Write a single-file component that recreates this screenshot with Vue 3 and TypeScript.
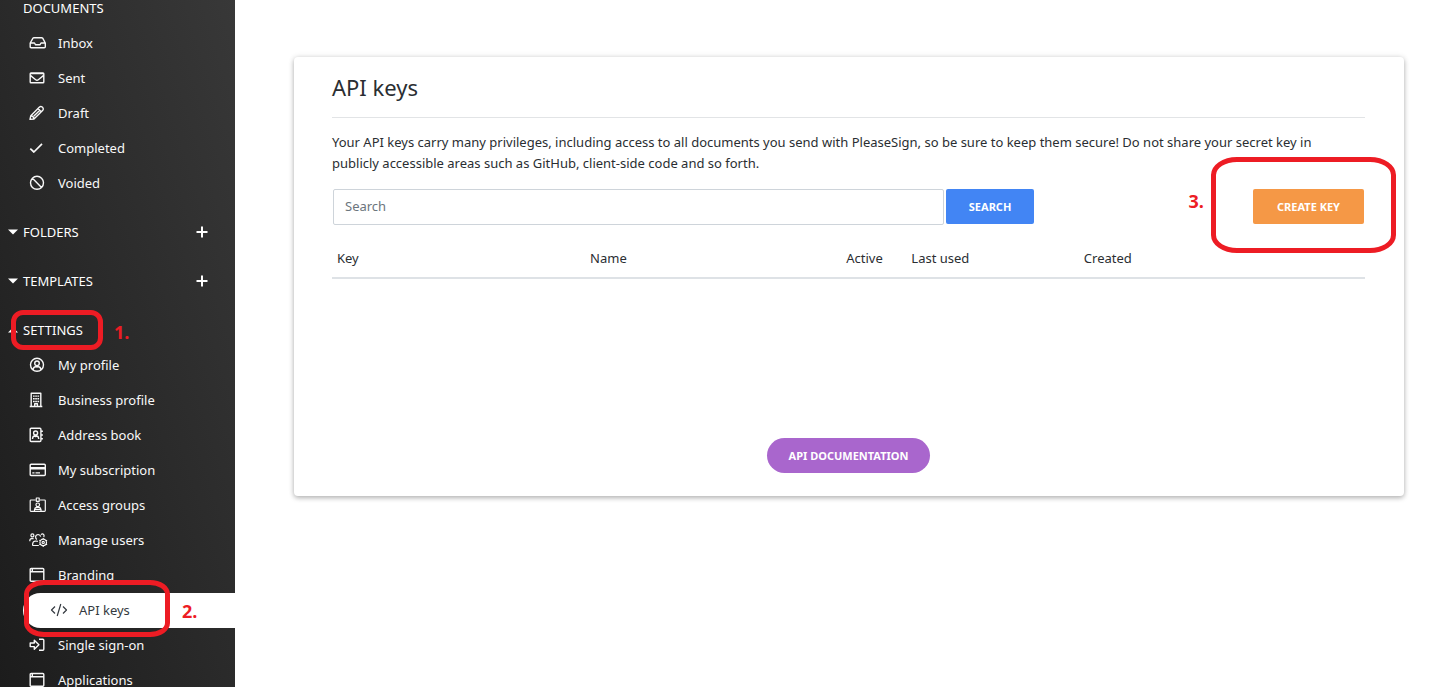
<script setup lang="ts">
import { ref } from 'vue'

interface NavItem {
  label: string
  icon: string
  active?: boolean
}

interface NavSection {
  title: string
  caret?: 'up' | 'down'
  addable?: boolean
  mark?: boolean
  items: NavItem[]
}

const sections: NavSection[] = [
  {
    title: 'DOCUMENTS',
    items: [
      { label: 'Inbox', icon: 'inbox' },
      { label: 'Sent', icon: 'mail' },
      { label: 'Draft', icon: 'pencil' },
      { label: 'Completed', icon: 'check' },
      { label: 'Voided', icon: 'ban' },
    ],
  },
  { title: 'FOLDERS', caret: 'down', addable: true, items: [] },
  { title: 'TEMPLATES', caret: 'down', addable: true, items: [] },
  {
    title: 'SETTINGS',
    caret: 'up',
    mark: true,
    items: [
      { label: 'My profile', icon: 'user' },
      { label: 'Business profile', icon: 'building' },
      { label: 'Address book', icon: 'book' },
      { label: 'My subscription', icon: 'card' },
      { label: 'Access groups', icon: 'badge' },
      { label: 'Manage users', icon: 'users' },
      { label: 'Branding', icon: 'window' },
      { label: 'API keys', icon: 'code', active: true },
      { label: 'Single sign-on', icon: 'signin' },
      { label: 'Applications', icon: 'window' },
    ],
  },
]

const icons: Record<string, string> = {
  inbox: 'M1.2 8 4 3.200Q4.300 2.700 5 2.700H12.600Q13.300 2.700 13.700 3.200L16.300 8V11.800Q16.300 12.800 15.300 12.800H2.200Q1.200 12.800 1.200 11.800ZM1.400 8H5.500L6.600 9.800H10.900L12 8H16.100',
  mail: 'M2 3H14Q14.800 3 14.800 3.800V12Q14.800 12.800 14 12.800H2Q1.200 12.800 1.200 12V3.800Q1.200 3 2 3ZM1.300 5.400 6.700 9.700Q8 10.700 9.300 9.700L14.700 5.400M1.400 3.600H14.600',
  pencil: 'M1 14.400 1.800 10.700 10.500 2Q11.800 .9 13.200 2L13.800 2.600Q14.900 4 13.800 5.300L5 14ZM2 10.900Q4.500 11.200 5.100 13.900M9.200 3.700 12.200 6.700M4.700 11.300 10.600 5.400',
  check: 'M1.300 8.700 4.900 12 13 3.900',
  ban: 'M8 1.300A6.500 6.500 0 1 1 8 14.300A6.500 6.500 0 1 1 8 1.300ZM3.500 3.200 12.500 12.400',
  user: 'M8 1.300A6.500 6.500 0 1 1 8 14.300A6.500 6.500 0 1 1 8 1.300ZM8 4A2.300 2.300 0 1 1 8 8.600A2.300 2.300 0 1 1 8 4ZM4.200 12.300Q4.600 9.700 6.600 9.700Q8 10.300 9.400 9.700Q11.400 9.700 11.800 12.300',
  building: 'M2.200 14.300V1.300H11.800V14.300M.7 14.500H13.300M4 4.100H5.700M6.200 4.100H7.900M8.400 4.100H10.100M4 6.800H5.700M6.200 6.800H7.900M8.400 6.800H10.100M4 9.500H5.700M6.200 9.500H7.900M8.400 9.500H10.100M5.700 14.500V11.800H8.400V14.500',
  book: 'M2.200 1.300H10.900Q11.900 1.300 11.900 2.300V13.500Q11.900 14.500 10.900 14.500H2.200Q1.200 14.500 1.200 13.500V2.300Q1.200 1.300 2.200 1.300ZM6.600 4A2 2 0 1 1 6.600 8A2 2 0 1 1 6.600 4ZM3.500 12Q3.700 9.200 5.200 9L6.600 9.500 8 9Q9.500 9.200 9.700 12M13.200 3.500V5M13.200 7.200V8.700M13.200 11V12.500',
  card: 'M2.200 2.300H15.300Q16.300 2.300 16.300 3.300V12.500Q16.300 13.500 15.300 13.500H2.200Q1.200 13.500 1.200 12.500V3.300Q1.200 2.300 2.200 2.300ZM1.200 5.600H16.300M1.200 6.800H16.300M3.300 10.900H5.500M6.500 10.900H11',
  badge: 'M6.500 3H2Q1.200 3 1.200 3.800V13.500Q1.200 14.300 2 14.300H15.500Q16.300 14.300 16.300 13.500V3.800Q16.300 3 15.500 3H11M7.300 1H10.200V4.300H7.300ZM8.750 6A1.800 1.800 0 1 1 8.750 9.600A1.800 1.800 0 1 1 8.750 6ZM5.500 14V12.500Q5.700 10.700 7.500 10.400H10Q11.800 10.700 12 12.500V14M5.700 12.400H11.800',
  users: 'M3.400 1.900A1.500 1.500 0 1 1 3.400 4.900A1.500 1.500 0 1 1 3.400 1.900ZM7.900 7.500Q6.500 6.500 6.600 4.700Q7 2.500 9.200 2.500Q11.200 2.600 11.700 4.600M12 2.600Q13.800 1 15 3.100Q15.300 4.200 14.600 5M.8 9.200Q.6 6.800 2.500 6.600H4.600M9.800 13.500H4.200Q3.500 13.500 3.600 12.300Q3.700 9.200 6.600 9L8.900 9.300M14.200 5.900V7.100M14.200 13.700V14.900M10.300 8.200 11.400 8.800M17 12 18.100 12.600M10.300 12.600 11.400 12M17 8.800 18.100 8.200M14.200 7.100A3.300 3.300 0 1 1 14.200 13.700A3.300 3.300 0 1 1 14.200 7.100ZM14.200 9.300A1.100 1.100 0 1 1 14.200 11.500A1.100 1.100 0 1 1 14.200 9.300Z',
  window: 'M2.200 1.500H13.800Q14.800 1.500 14.800 2.500V13.300Q14.800 14.300 13.800 14.300H2.200Q1.200 14.300 1.200 13.300V2.500Q1.200 1.500 2.200 1.500ZM1.200 4.800H14.800M3.300 2.300V4.200',
  code: 'M5 4.500 1.500 8 5 11.500M13 4.500 16.500 8 13 11.500M10.800 2 7.200 14',
  signin: 'M1.200 6H5.300V3.300L9.900 7.800 5.300 12.300V9.600H1.200ZM10 2.300H13.800Q14.800 2.300 14.800 3.300V12.300Q14.800 13.300 13.800 13.300H10',
}

const columns = [
  { label: 'Key', cls: 'c-key' },
  { label: 'Name', cls: 'c-name' },
  { label: 'Active', cls: 'c-active' },
  { label: 'Last used', cls: 'c-used' },
  { label: 'Created', cls: 'c-created' },
]

const query = ref('')
</script>

<template>
  <div class="page">
    <nav class="sidebar">
      <section v-for="s in sections" :key="s.title" class="section">
        <div class="head">
          <button class="toggle" type="button">
            <svg class="caret" viewBox="0 0 10 6" aria-hidden="true">
              <path v-if="s.caret === 'down'" d="M0 .5H10L5 5.500Z" />
              <path v-if="s.caret === 'up'" d="M0 5.500H10L5 .5Z" />
            </svg>
            <span>{{ s.title }}</span>
          </button>
          <button v-if="s.addable" class="add" type="button" :aria-label="'Add to ' + s.title">
            <svg viewBox="0 0 12 12"><path d="M6 .5V11.500M.5 6H11.500" /></svg>
          </button>
          <template v-if="s.mark">
            <span class="ring ring-one"></span>
            <span class="step step-one">1.</span>
          </template>
        </div>
        <ul v-if="s.items.length" class="items">
          <li v-for="i in s.items" :key="i.label" class="row">
            <a href="#" class="item" :class="{ active: i.active }">
              <svg class="icon" :class="'i-' + i.icon" viewBox="0 0 18 16" aria-hidden="true"><path :d="icons[i.icon]" /></svg>
              <span>{{ i.label }}</span>
            </a>
            <template v-if="i.active">
              <span class="ring ring-two"></span>
              <span class="step step-two">2.</span>
            </template>
          </li>
        </ul>
      </section>
    </nav>

    <main class="main">
      <section class="card">
        <h1>API keys</h1>
        <p>
          Your API keys carry many privileges, including access to all documents you send with PleaseSign, so be sure to
          keep them secure! Do not share your secret key in publicly accessible areas such as GitHub, client-side code
          and so forth.
        </p>
        <div class="bar">
          <form class="search" @submit.prevent>
            <input v-model="query" type="text" placeholder="Search" aria-label="Search" />
            <button class="btn blue" type="submit">SEARCH</button>
          </form>
          <div class="create">
            <button class="btn orange" type="button">CREATE KEY</button>
            <span class="ring ring-three"></span>
            <span class="step step-three">3.</span>
          </div>
        </div>
        <table>
          <thead>
            <tr>
              <th v-for="c in columns" :key="c.label" :class="c.cls" scope="col">{{ c.label }}</th>
            </tr>
          </thead>
        </table>
        <div class="foot">
          <a href="#" class="btn purple">API DOCUMENTATION</a>
        </div>
      </section>
    </main>
  </div>
</template>

<style>
body {
  margin: 0;
  background: #fff;
}
</style>

<style scoped>
* {
  box-sizing: border-box;
}
.page {
  display: flex;
  height: 100vh;
  overflow: hidden;
  font-family: 'Noto Sans', 'Open Sans', sans-serif;
  font-size: 13px;
  color: #2a2e32;
}
button,
input {
  font: inherit;
}
.sidebar {
  flex: 0 0 235px;
  overflow: hidden;
  color: #fff;
  background: linear-gradient(72deg, #1c1c1c, #383838);
}
.section {
  margin-top: 14px;
}
.section:first-child {
  margin-top: -9px;
}
.head {
  position: relative;
  display: flex;
  align-items: center;
  justify-content: space-between;
  height: 35px;
  padding: 0 27px 2px 8px;
}
.toggle,
.add {
  display: flex;
  align-items: center;
  padding: 0;
  border: 0;
  background: none;
  color: inherit;
}
.toggle {
  gap: 5px;
}
.caret {
  width: 10px;
  height: 6px;
  fill: #fff;
}
.add svg {
  width: 12px;
  height: 12px;
  stroke: #fff;
  stroke-width: 2;
}
.items {
  margin: 0;
  padding: 0;
  list-style: none;
}
.row {
  position: relative;
}
.item {
  display: flex;
  align-items: center;
  gap: 11px;
  height: 35px;
  padding: 0 0 2px 29px;
  color: #f8f8f8;
  text-decoration: none;
}
.item.active {
  margin-left: 23px;
  padding-left: 27px;
  border-radius: 18px 0 0 18px;
  background: #fff;
  color: #343a40;
}
.icon {
  width: 18px;
  height: 16px;
  overflow: visible;
  fill: none;
  stroke: currentColor;
  stroke-width: 1.4;
  stroke-linejoin: round;
}
.i-check {
  stroke-width: 1.7;
}
.i-users,
.i-badge,
.i-code {
  stroke-width: 1.2;
}
.main {
  flex: 1;
  min-width: 0;
  padding: 57px 42px 0 59px;
}
.card {
  padding: 0 39px 23px 38px;
  border-radius: 4px;
  background: #fff;
  box-shadow: 0 2px 5px rgba(0, 0, 0, 0.26), 0 0 6px rgba(0, 0, 0, 0.1);
}
h1 {
  margin: 0;
  padding: 12px 0 12px;
  border-bottom: 1px solid #e2e4e6;
  font-size: 22px;
  line-height: 36px;
  font-weight: 400;
}
p {
  margin: 14px 0 15px;
  padding-right: 30px;
  line-height: 21px;
}
.bar {
  display: flex;
  align-items: flex-start;
  justify-content: space-between;
  padding: 0 1px;
}
.search {
  display: flex;
  gap: 2px;
  width: 68%;
}
.search input {
  flex: 1;
  min-width: 0;
  height: 36px;
  padding: 0 11px 2px;
  border: 1px solid #ced4da;
  border-radius: 2px;
  background: #fff;
  color: #495057;
}
.search input::placeholder {
  color: #6c757d;
  opacity: 1;
}
.btn {
  display: flex;
  align-items: center;
  justify-content: center;
  height: 35px;
  padding: 0;
  border: 0;
  border-radius: 2px;
  color: #fff;
  font-size: 11px;
  font-weight: 700;
  text-decoration: none;
}
.blue {
  width: 88px;
  background: #4285f4;
}
.orange {
  width: 111px;
  background: #f59846;
}
.purple {
  width: 163px;
  border-radius: 18px;
  background: #a966cd;
}
.create {
  position: relative;
}
table {
  width: 100%;
  margin-top: 14px;
  table-layout: fixed;
  border-collapse: collapse;
  border-bottom: 2px solid #dee2e6;
}
th {
  height: 39px;
  padding: 0 5px 1px;
  text-align: left;
  font-weight: 400;
  white-space: nowrap;
}
.c-key {
  width: 24.5%;
}
.c-name {
  width: 24.8%;
}
.c-active {
  width: 6.3%;
}
.c-used {
  width: 16.7%;
}
.foot {
  display: flex;
  justify-content: center;
  padding-top: 159px;
}
.ring {
  position: absolute;
  z-index: 2;
  border: 5px solid #ed1c24;
  pointer-events: none;
}
.step {
  position: absolute;
  z-index: 2;
  color: #ed1c24;
  font-family: 'Open Sans', sans-serif;
  font-size: 18px;
  line-height: 24px;
  font-weight: 700;
}
.ring-one {
  left: 11px;
  top: -3px;
  width: 92px;
  height: 40px;
  border-radius: 12px;
}
.step-one {
  left: 114px;
  top: 7px;
}
.ring-two {
  left: 24px;
  top: -13px;
  width: 146px;
  height: 57px;
  border-radius: 20px / 14px;
}
.step-two {
  left: 182px;
  top: 6px;
}
.ring-three {
  top: -32px;
  right: -32px;
  width: 185px;
  height: 96px;
  border-radius: 26px / 18px;
}
.step-three {
  top: 0;
  right: 160px;
}
</style>
